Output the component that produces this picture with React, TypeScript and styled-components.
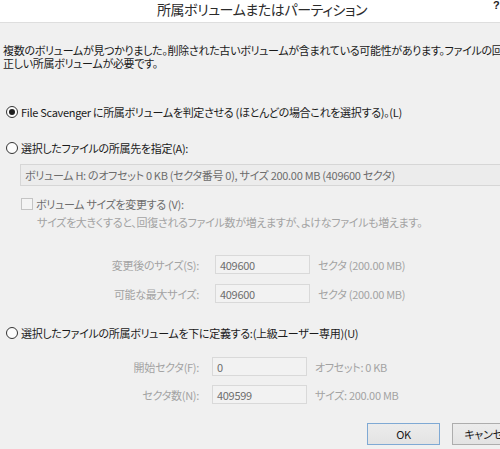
import { createGlobalStyle, styled } from 'styled-components'

const GlobalStyle = createGlobalStyle`
  html, body {
    margin: 0;
    padding: 0;
    background: #f0f0f0;
    overflow: hidden;
  }
  body {
    font-family: 'Noto Sans CJK JP', 'Noto Sans', sans-serif;
    font-feature-settings: 'palt';
    font-size: 11px;
    letter-spacing: -0.3px;
    color: #1a1a1a;
  }
`

const Dialog = styled.div`
  width: 540px;
  height: 449px;
  overflow: hidden;
  background: #f0f0f0;
`

const TitleBar = styled.div`
  position: relative;
  height: 22px;
  padding-right: 16px;
  background: #ffffff;
  border-bottom: 1px solid #dedede;
  display: flex;
  align-items: center;
  justify-content: center;
`

const Title = styled.span`
  font-size: 14px;
  letter-spacing: -0.4px;
  line-height: 18px;
  color: #2b2b2b;
  margin-top: -4px;
`

const HelpButton = styled.span`
  position: absolute;
  left: 493px;
  top: 0;
  font-family: 'Liberation Sans', sans-serif;
  font-size: 11px;
  line-height: 11px;
  font-weight: bold;
  color: #222;
`

const Body = styled.div`
  display: flex;
  flex-direction: column;
  padding-left: 3px;
`

const Message = styled.div`
  margin-top: 21px;
  line-height: 13px;
  white-space: nowrap;
  span {
    display: block;
  }
`

const OptionRow = styled.label<{ $mt: number }>`
  display: flex;
  align-items: center;
  gap: 3px;
  height: 14px;
  margin-top: ${(p) => p.$mt}px;
  padding-left: 3px;
  white-space: nowrap;
`

const Radio = styled.span<{ $checked?: boolean }>`
  box-sizing: border-box;
  width: 12px;
  height: 12px;
  border-radius: 50%;
  border: 1px solid #333;
  background: #fcfcfc;
  display: flex;
  align-items: center;
  justify-content: center;
  flex: none;
  &::after {
    content: '';
    width: 6px;
    height: 6px;
    border-radius: 50%;
    background: #1c1c1c;
    display: ${(p) => (p.$checked ? 'block' : 'none')};
  }
`

const ComboBox = styled.div`
  box-sizing: border-box;
  margin: 9px 0 0 17px;
  height: 22px;
  width: 520px;
  border: 1px solid #d6d6d6;
  background: #ececec;
  color: #6d6d6d;
  padding-left: 4px;
  display: flex;
  align-items: center;
  white-space: nowrap;
`

const CheckRow = styled.div`
  display: flex;
  align-items: center;
  gap: 3px;
  height: 14px;
  margin: 11px 0 0 18px;
  color: #6d6d6d;
  white-space: nowrap;
`

const CheckBox = styled.span`
  box-sizing: border-box;
  width: 12px;
  height: 12px;
  border: 1px solid #c4c4c4;
  background: #f4f4f4;
  flex: none;
`

const Hint = styled.div`
  margin: 4px 0 0 34px;
  line-height: 14px;
  color: #a3a3a3;
  white-space: nowrap;
`

const FormGrid = styled.div<{ $mt: number; $inputLeft: number; $gap: number }>`
  display: grid;
  grid-template-columns: ${(p) => p.$inputLeft - 3}px 95px auto;
  grid-auto-rows: 19px;
  row-gap: ${(p) => p.$gap}px;
  margin-top: ${(p) => p.$mt}px;
  align-items: center;
  white-space: nowrap;
`

const FieldLabel = styled.span<{ $pad: number }>`
  justify-self: end;
  padding-right: ${(p) => p.$pad}px;
  color: #a3a3a3;
`

const TextBox = styled.div`
  box-sizing: border-box;
  height: 19px;
  border: 1px solid #d9d9d9;
  background: #f2f2f2;
  color: #6d6d6d;
  padding-left: 4px;
  display: flex;
  align-items: center;
`

const Unit = styled.span`
  padding-left: 8px;
  color: #a3a3a3;
`

const ButtonRow = styled.div`
  display: flex;
  justify-content: flex-end;
  gap: 12px;
  margin-top: 19px;
  padding-right: 15px;
`

const Button = styled.button<{ $default?: boolean }>`
  box-sizing: border-box;
  width: 73px;
  height: 22px;
  font: inherit;
  letter-spacing: inherit;
  color: #1a1a1a;
  background: linear-gradient(#ececec, #e3e3e3);
  border: 1px solid ${(p) => (p.$default ? '#7fa9d4' : '#adadad')};
  padding: 0;
`

const sizeRows = [
  { label: '変更後のサイズ(S):', value: '409600', unit: 'セクタ (200.00 MB)' },
  { label: '可能な最大サイズ:', value: '409600', unit: 'セクタ (200.00 MB)' }
]

const rangeRows = [
  { label: '開始セクタ(F):', value: '0', unit: 'オフセット: 0 KB' },
  { label: 'セクタ数(N):', value: '409599', unit: 'サイズ: 200.00 MB' }
]

const App = () => {
  return (
    <Dialog>
      <GlobalStyle />
      <TitleBar>
        <Title>所属ボリュームまたはパーティション</Title>
        <HelpButton>?</HelpButton>
      </TitleBar>
      <Body>
        <Message>
          <span>複数のボリュームが見つかりました。削除された古いボリュームが含まれている可能性があります。ファイルの回復には</span>
          <span>正しい所属ボリュームが必要です。</span>
        </Message>

        <OptionRow $mt={35}>
          <Radio $checked />
          File Scavenger に所属ボリュームを判定させる (ほとんどの場合これを選択する)。(L)
        </OptionRow>

        <OptionRow $mt={22}>
          <Radio />
          選択したファイルの所属先を指定(A):
        </OptionRow>
        <ComboBox>ボリューム H: のオフセット 0 KB (セクタ番号 0), サイズ 200.00 MB (409600 セクタ)</ComboBox>
        <CheckRow>
          <CheckBox />
          ボリューム サイズを変更する (V):
        </CheckRow>
        <Hint>サイズを大きくすると、回復されるファイル数が増えますが、よけなファイルも増えます。</Hint>
        <FormGrid $mt={26} $inputLeft={215} $gap={10}>
          {sizeRows.map((r) => (
            <>
              <FieldLabel $pad={16}>{r.label}</FieldLabel>
              <TextBox>{r.value}</TextBox>
              <Unit>{r.unit}</Unit>
            </>
          ))}
        </FormGrid>

        <OptionRow $mt={23}>
          <Radio />
          選択したファイルの所属ボリュームを下に定義する:(上級ユーザー専用)(U)
        </OptionRow>
        <FormGrid $mt={17} $inputLeft={212} $gap={9}>
          {rangeRows.map((r) => (
            <>
              <FieldLabel $pad={13}>{r.label}</FieldLabel>
              <TextBox>{r.value}</TextBox>
              <Unit>{r.unit}</Unit>
            </>
          ))}
        </FormGrid>

        <ButtonRow>
          <Button $default>OK</Button>
          <Button>キャンセル</Button>
        </ButtonRow>
      </Body>
    </Dialog>
  )
}

export default App
